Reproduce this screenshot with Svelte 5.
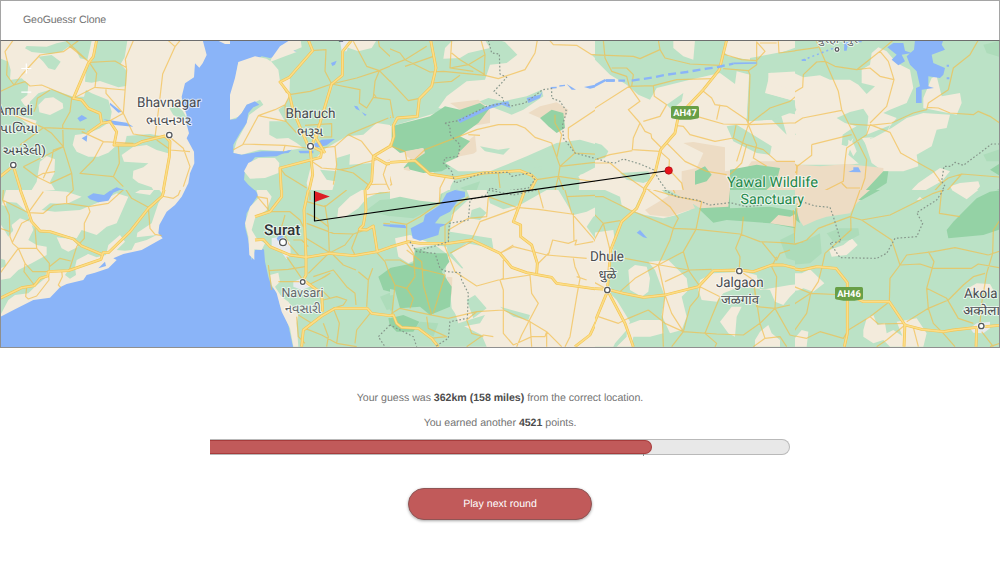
<script>
  // Each sheet is a window on the map, drawn at three units per pixel.
  const sheets = [
    {
      x: 0, y: 40, w: 230, h: 150, vx: 0, vy: 120, base: 'sand',
      areas: [
        ['park', 'M75 145 80 138 140 140 170 130 205 122H275L262 180 240 175 228 150 205 140 185 155 150 162 95 156Z'],
        ['park', 'M115 170 155 165 182 185 165 210 145 205 130 185Z'],
        ['park', 'M290 122H382L374 172 362 192 380 212 378 258 355 262 300 243 275 248 255 245 258 205 275 185Z'],
        ['park', 'M0 175 25 185 32 210 30 240 65 235 85 252 82 285 62 300 75 318 100 325V360L80 360 0 330Z'],
        ['park', 'M90 305 115 280 155 268 220 290 252 290 258 270 275 280 325 300 335 335 330 365 300 385 265 400 225 405 218 435 230 455 265 470 295 470 325 458 345 440 375 430 380 408 450 402 495 410 512 435 505 460 470 450 440 435 400 440 365 465 372 485 445 490 430 502 400 512 398 535 415 548 455 562 460 570H0V335L75 360Z'],
        ['park', 'M508 325 530 318 548 332 565 362 545 358 520 345Z'],
        ['sand', 'M115 315 135 295 160 292 188 310 190 325 150 345 118 337Z'],
        ['sand', 'M120 485 140 468 165 478 163 520 150 545 165 570H95L110 545Z'],
        ['sand', 'M50 345 75 352 110 362 105 378 85 375Z'],
        ['water', 'M608 120 620 165 608 190 598 203 585 190 582 232 555 250 545 290 548 310 560 345 558 365 567 400 560 415 582 455 583 490 570 520 565 550 555 570H750V120Z'],
        ['sand', 'M650 120 675 132H720V120Z'],
        ['water', 'M232 355 245 345 262 355 240 365Z M245 415 262 405 260 425Z M330 308 365 335 355 338 330 315Z M310 358 380 368 400 380 345 375Z M330 572 350 562 372 570Z']
      ],
      minor: 'M40 120 15 155 22 185 20 225 42 255 0 275 M42 255 75 245 90 258 125 255 220 295 M42 255 65 225 120 165 190 155 235 122 M198 122 268 187 290 220 285 262 M268 187 345 183 380 203 M268 187 208 138 M400 122 376 178 380 210 370 340 400 402 465 412 M285 262 375 270 M220 295 285 262 M318 268V280L370 340 330 362 M540 122 525 140 488 222 478 310 465 412 M525 140 505 122 M215 295 210 335 188 375 190 440 215 520 220 570 M150 270 112 295 108 320 102 335 M40 345 130 383 255 388 M130 383 155 400 190 440 M190 440 160 450 155 480 130 535 M245 395 310 425 400 430 M310 425 280 480 240 520 290 525 340 530 370 560 M355 435 358 490 340 530 M60 435 130 383 M190 440 70 500 M70 500 110 530 130 520 165 515 M110 530 150 550 215 520 M508 410 550 445 570 500 550 560 M510 450 570 455 M465 412 500 410 M470 420 512 450',
      major: 'M290 120 280 170 265 190 220 295 245 300 265 325 300 340 305 370 262 400 M305 370 330 365 350 395 342 435 405 435 425 425 495 408 510 425 508 470 490 570 M40 498 0 530 M40 498 62 570'
    },
    {
      x: 0, y: 190, w: 230, h: 157, vx: 0, vy: 30, base: 'sand',
      areas: [
        ['park', 'M0 30H18L5 75 28 82 22 110 40 150 25 170 10 145 0 130Z'],
        ['park', 'M18 65 50 68 80 95 90 125 60 115 35 135 38 155 25 150Z'],
        ['park', 'M130 30H420L405 38 450 45 470 20 490 45 475 70 455 130 412 158 410 172 470 165 440 180 405 190 395 210 375 212 350 210 375 185 360 165 325 195 318 225 290 232 265 222 230 240 225 262 228 285 210 296 195 285 205 270 140 275 135 295 105 320 85 340 45 345 25 360 0 408V300L30 295 55 270 95 250 140 225 140 200 110 195 85 180 100 150 95 135 120 150 170 160 230 175 245 150 290 165 320 140 350 130 385 50 350 40 300 65 240 90 165 95 125 90 150 70 200 72 245 50 200 35Z'],
        ['sand', 'M170 172 220 178 235 200 205 215 185 205Z M235 245 265 222V245Z'],
        ['park', 'M0 235 15 240 18 258 0 265Z'],
        ['water', 'M555 30 545 50 525 75 500 95 478 135 475 160 488 175 425 210 370 222 340 235 350 240 325 265 285 278 260 285 250 300 200 312 180 322 150 353 100 360 45 388 0 411V510H750V30Z'],
        ['water', 'M262 50 280 40 312 45 330 32 360 25 378 22 340 38 325 62 295 67 270 58Z M295 265 315 245 318 258Z']
      ],
      minor: 'M10 30 8 60 85 98 130 35 M8 60 28 105 30 170 38 190 55 205 0 280 M0 145 30 155 M88 118 65 130 38 185 M85 98 130 100 160 75 200 70 265 80 325 70 375 25 395 55 445 82 M265 80 270 95 253 130V175L230 200 208 270 M220 30 200 50V70 M105 145 110 205 55 205 75 250 72 275 105 318 M110 205 148 250V270 M75 250 98 275H145 M148 260 180 235 212 243 M185 272 187 290 175 315 182 322 M80 322 77 350 85 357 110 348 147 300 145 275 M445 82 450 145 465 163 485 167 M485 48 520 55 535 45 545 20 M125 0 150 22 165 25 180 0 M350 0 375 25',
      major: 'M50 0 85 95 95 125 120 153 150 155 220 177 245 198 305 223 M495 20 487 48 445 85 390 155 325 218 310 217 303 238 205 272 145 275 143 288 120 295 103 317 65 323 0 355'
    },
    {
      x: 230, y: 40, w: 160, h: 150, vx: 0, vy: 6, base: 'park',
      areas: [
        ['water', 'M0 6H195L150 25 200 40 120 60 95 55 70 70 25 72 15 130 0 200Z'],
        ['sand', 'M125 60 150 25 180 6H212L215 28 190 38 200 42 165 55 120 72Z'],
        ['sand', 'M25 72 75 55 110 62 125 72 145 95 150 130 180 120 178 175 165 200 145 215 165 250 118 250V290L140 302 175 300 200 315 220 330 160 340 90 335 35 350 10 345 20 310 45 265 58 230 100 200 90 185 70 195 50 200 30 235 0 245V170L15 120Z'],
        ['water', 'M0 245 18 243 35 225 50 200 75 190 88 200 70 208 55 225 50 255 30 285 10 320 10 345 35 350 95 340 165 340 185 335 140 355 75 358 45 395 42 425 55 440 80 462 75 480H0Z'],
        ['sand', 'M42 400 55 375 85 360 135 360 148 375 145 405 105 420 60 422Z'],
        ['sand', 'M245 375 280 335 350 295 400 290 440 255 485 262 490 290 600 355V480H400L370 450 385 435 355 430 330 445 300 475 240 480 230 435Z'],
        ['park', 'M320 360 360 348 358 380 425 375 420 450 360 470 300 480 315 430 290 425 270 395 320 400Z'],
        ['forest', 'M495 250 600 225V380L555 405 520 375 555 345 490 325Z'],
        ['tan', 'M490 405 540 380 555 400 520 405Z M465 370 540 330 585 330V355L510 365Z'],
        ['sand', 'M360 6H440L425 30 385 40 350 28Z'],
        ['town', 'M330 6H362L350 40H335Z'],
        ['water', 'M303 75 320 68 315 80 307 84Z M240 325 275 305 315 303 290 322 255 330Z M140 348 185 335 175 345Z M205 338 250 338V346H210Z M372 203 382 205 390 218 378 213Z M395 222 410 230 405 234Z']
      ],
      minor: 'M178 170 240 160 305 138 M150 130 170 165 M165 200 135 215 85 233 38 320 10 335 M178 175 165 200 168 250 85 233 M38 318 165 322 230 330 M165 322 160 340 M245 38 288 35 285 100 305 138 390 155 388 195 410 210 430 178 435 130 448 98 M305 138 380 120 448 98 410 85 370 10 M448 98 525 65 480 55 448 25 445 6 M525 65 600 15 M525 65 535 85 600 102 M448 98 495 145 520 150 540 180 568 188 M430 178 480 185 497 235 M430 165 440 180 M225 262 305 257 V297 H270 M168 250 200 285 M355 290 475 240 M355 290 315 325 275 330 M355 290 395 310 430 355 M315 325 320 380 310 440 M245 370 275 390 330 395 360 390 400 375 440 365 M330 395 370 405 415 440 M300 460 400 465 415 440 470 438 460 410 470 380 M470 438 483 465 400 460 M470 378 570 365 600 330 M150 390 165 410 230 450 M155 460H310',
      major: 'M235 6 248 38 178 118 150 132 178 168 190 220 235 325 M365 6 338 40 337 112 305 138 270 255 245 325 M245 325 275 340 272 358 150 390 155 480 M240 325 248 410 232 480 M265 280 258 300 285 345 M600 148 568 185 567 232 497 240 487 262 492 300 480 325 430 355 425 430 400 470 M430 355 470 378 555 365 600 405'
    },
    {
      x: 230, y: 190, w: 160, h: 157, vx: 0, vy: 0, base: 'park',
      areas: [
        ['water', 'M0 0H75L85 15 65 45 50 70 45 110 55 150 65 210 75 180 102 178 105 215 115 260 125 290 145 310 150 345 175 405 190 475H0Z'],
        ['sand', 'M80 0H110L125 20 110 60 75 85 65 120 80 145 105 160 95 180 73 178V210L58 195 55 140 45 100 60 50 85 25Z'],
        ['sand', 'M120 255 145 248 150 275 135 290 155 320 175 335 205 375 200 400 205 470H190L180 415 155 365 140 310 125 285Z'],
        ['parkmid', 'M410 60 450 30 510 25 560 10 600 20V90L500 85Z M450 320 500 300 510 350 470 360Z'],
        ['sand', 'M325 55 360 20 395 0H600V34L560 28 520 10 450 6 410 25 385 55 340 85 322 80Z M495 145 550 135 600 180V215L555 205 530 225 505 200Z'],
        ['forest', 'M445 260 480 235 520 232 560 190 600 180V370L540 350 490 350 500 310 460 300Z M475 385 520 372 565 395 560 415 520 428 480 410Z'],
        ['town', 'M125 145 150 140 180 155 182 190 170 208 150 180 125 170Z M190 275 225 262 240 290 215 300 190 290Z'],
        ['water', 'M542 115 560 95 600 70V150L555 145Z M460 103 520 107 525 115 460 108Z M140 145 155 130 160 145 145 155Z']
      ],
      minor: 'M82 20 120 65 H180 L210 90 220 110 M115 65 112 25 80 20 M165 75 155 110 175 160 210 200 M230 35 285 50 350 0 M285 45 295 110 298 188 M240 30 240 5 M230 70 262 85 295 110 M230 100 310 130 370 132 420 115 M370 132 345 165 300 188 228 145 M298 188 235 250 M300 185 340 225 378 240 M375 195 365 175 390 110 M115 242 175 238 225 230 M190 150 215 150 235 170 M145 275 215 275 M170 200 215 265 M115 225 125 300 M250 260 310 240 350 290 375 310 378 345 M385 245 415 270 410 350 M415 270 428 235 M275 265 300 250 285 260 235 285 M280 330 320 320 350 330 340 345 310 355 M300 325 275 300 M438 185 465 215 490 285 495 375 M465 210 500 210 530 235 560 260 555 350 M530 155 528 225 M490 285 520 280 545 305 M500 375 540 350 600 365 M225 415 275 435 320 460 380 470 M310 355 328 400 320 460 M280 400 295 440 290 470 M420 370 380 420 375 460 M205 375 245 400 225 420 M200 380 205 440 225 460 M530 105 545 110 600 85 M460 100 530 105 530 155 M405 15 480 6 485 0',
      major: 'M235 0 222 60 228 200 228 255 220 270 275 310 278 365 M155 0 155 20 120 65 75 80 M405 0 408 60 400 105 388 118 410 120 430 108 442 185 M75 150 100 148 120 170 180 195 228 202 300 190 370 197 442 185 540 150 600 158 M215 470 220 420 275 378 315 355 412 355 425 370 490 378 500 398 520 410 565 415 600 450',
      dots: 'M540 150 560 180 600 190 M480 405 445 440 465 470 M480 405 525 430 560 460 V470'
    },
    {
      x: 390, y: 40, w: 205, h: 150, vx: 30, vy: 6, base: 'sand',
      areas: [
        ['park', 'M0 6H355L375 12 412 50 380 75 330 80 315 125 260 130 200 175 175 210 200 215 50 260 0 270Z'],
        ['sand', 'M215 10 315 6 330 30 265 45 240 60 190 62 195 30Z'],
        ['park', 'M270 190 300 190 325 180 370 190 440 175 485 155 490 175 430 215 395 230 330 205Z'],
        ['tan', 'M210 195 295 185 330 215 330 255 270 265 240 215Z M225 340 285 292 290 340 240 380Z'],
        ['park', 'M160 400 230 375 240 395 330 400 440 355 530 315 600 305 670 325V400L600 410 595 480H170Z M300 325 355 335 390 330 370 350 315 340Z'],
        ['forest', 'M35 265 60 258 150 235 195 205 240 215 300 195 328 212 295 255 240 295 270 310 235 345 230 375 185 400 130 405 70 390 95 360 130 330 60 345 35 325Z'],
        ['tan', 'M75 340 130 330 135 345 100 368 80 355Z M40 405 85 385 95 410 70 400Z'],
        ['sand', 'M290 345 315 340 335 365 400 365 320 400 235 400 195 375 240 355Z'],
        ['tan', 'M445 225 480 205 530 193 565 215 555 240 540 260 520 230 480 240Z'],
        ['forest', 'M480 240 515 215 550 225 555 270 530 285 505 265Z'],
        ['park', 'M635 50H670V85Z'],
        ['sand', 'M595 415 670 375V450L610 440Z M0 370 68 380 72 395 130 408 225 420 212 445 205 480H0Z'],
        ['park', 'M460 390 490 385 465 420Z'],
        ['parkmid', 'M240 450 300 430 285 470Z'],
        ['water', 'M232 245 340 198 385 190 392 210 365 200 330 212 240 255Z M440 180 480 170 488 160 480 180 445 195Z M200 475 230 455 258 462 235 480H200Z M560 138 588 155 575 155Z M612 147 670 135V142L630 152Z M490 152 505 152 M512 147 530 146V151L512 152Z M538 142 555 140V144L538 146Z']
      ],
      minor: 'M0 20 60 45 75 65 140 25 M75 65 150 102 190 100 315 112 355 122 435 95 465 45 472 6 M0 95 45 145 85 188 115 182 M0 95 75 65 M160 55 75 85 M215 6 210 90 265 80 315 50 303 6 M210 90 280 100 M155 135 215 130 240 112 M215 45 240 65 315 110 M508 6 520 20 590 22 635 50H670 M0 185 30 185 40 240 M35 325 75 340 80 365 M100 368 135 335 290 275 355 260 410 260 435 270 465 298 515 315 540 385 535 415 M670 200 565 270V300L585 345 670 350 M545 290 530 360 M585 345 540 385 670 370 M525 230V255L545 290 M535 415 470 425 M535 415 560 480 M535 415 670 435 M0 130 20 180 M195 420 180 450V480 M355 405 360 450 M265 290 300 292 M20 380 35 440 0 450 M535 415 520 480 M315 50 312 112',
      major: 'M152 6 168 90 155 145 118 182 112 235 52 240 40 262 42 295 32 325 0 340 M32 235 0 248 M0 375 105 368 150 408 225 420 310 405 420 398 455 412 468 425 455 450 440 480',
      dots: 'M325 6 335 45 358 48 360 108 380 118 342 160 368 180 372 195 393 204 435 195 488 155 515 152 515 180 540 190 560 220 548 260 550 300 585 345 670 368 M195 255 235 248 320 205 370 195 M195 255 210 265 210 290 240 320 235 355 195 360 190 375 215 400 225 435 280 415 310 405 385 403 395 415 450 405 465 425 445 450 370 460 330 450 320 475'
    },
    {
      x: 390, y: 190, w: 205, h: 157, vx: 30, vy: 0, base: 'sand',
      areas: [
        ['park', 'M0 0H260L270 25 215 75 210 125 335 145 340 175 260 160 215 190 250 235 215 240 220 350 235 400 305 435 320 470H0Z'],
        ['parkmid', 'M0 20 40 0H190L180 45 100 85 0 75Z M0 320 40 315 40 360 0 370Z M120 395 175 400 160 440 110 410Z'],
        ['sand', 'M0 0H205L182 12 178 38 120 32 60 20 0 34Z'],
        ['sand', 'M45 145 90 135 165 165 200 170 205 195 165 165 100 175 120 205 85 220 55 200Z'],
        ['sand', 'M205 195 250 240 275 330 235 385 215 355 210 300 195 250Z M265 345 290 345 295 370 260 375Z'],
        ['tan', 'M200 260 217 262 215 320Z'],
        ['park', 'M275 60 300 52 320 68 300 90 270 85Z M320 0H500L420 45 370 58 330 40Z M535 0H670V40L620 65 580 75Z M260 330 285 315 320 355 280 385Z M360 350 450 375 445 390 400 380Z M235 400 315 375 300 400 245 410Z'],
        ['forest', 'M0 240 40 232 100 220 105 175 155 190 200 190 208 215 185 245 215 290 210 350 150 375 120 350 60 355 45 300 0 290Z M30 385 70 375 118 395 100 425 50 425 30 405Z'],
        ['park', 'M640 80 670 70V150L645 145 620 110Z'],
        ['water', 'M92 115 130 95 135 75 180 45 200 10 225 0 255 5 255 20 235 30 210 65 180 80 165 100 200 103 180 112 175 135 120 152 98 145Z M10 102 75 105 80 115 10 109Z']
      ],
      minor: 'M0 90 80 103 120 80 178 40 180 0 M80 103 80 160 100 190 105 260 80 295 45 285 10 210 M80 180 125 215 130 285 155 375 M10 210 60 210 95 230 195 255 160 370 M80 295 100 325 90 355 M45 285 35 380 M265 20 225 50 215 90 195 105 195 170 225 245 290 288 355 270 450 255 M325 20 320 80 265 85 205 120 205 150 M325 20 410 52 M410 55 300 95 275 150 M410 52 475 58 575 72 M475 0 490 55 M555 0 575 70 640 145 650 160 M580 70 582 155 M210 190 275 155 M505 195 518 150 565 160 590 150 585 165 640 155 M360 190 400 170 500 195 620 205 M370 210V265L360 270 370 300V430L400 465 M450 255 455 310 475 340 425 435 410 470 M370 360 450 395 500 425 545 470 M500 425 495 440 455 440 400 465 M500 425V470 M580 205 585 230 600 265 590 320 570 440 555 470 M450 395 455 470 M205 385 290 365 370 360 M290 365 260 390 275 430 310 440 M140 380 145 415 200 440 150 445 M35 370 60 355 130 370 205 385 M470 225 510 185 M360 190 400 165 M590 260 620 270 M0 445 0 470 M260 470 310 435 340 440 M560 20 670 15',
      major: 'M0 180 85 155 120 160 205 160 275 150 360 190 395 232 440 248 515 262 530 280 670 300 M435 0 400 95 422 105V140L455 165 472 220 470 250 M0 380 40 375 50 400 65 412 115 415 155 445 175 470 M670 350 630 435 585 470',
      dots: 'M90 155 110 185 165 190 180 235 200 245 240 248 245 270 265 310 262 385 210 395 205 445 165 470 M120 180 165 168 205 155 208 100 265 90 270 30 320 15 325 0 400 15 470 0 M0 440 30 405 100 440 110 470'
    },
    {
      x: 595, y: 40, w: 200, h: 150, vx: 15, vy: 6, base: 'sand',
      areas: [
        ['park', 'M0 6H415L400 40 415 55 500 70 640 20V175L600 135 540 100 520 170 590 190 620 230 570 220 590 290 545 245 470 250 480 110 440 100 435 138 390 105 300 125 200 150 180 185 145 170 110 140 60 110 0 50Z'],
        ['park', 'M480 60 640 30V100L540 105 525 165 600 185 640 190V215L600 225 545 245 470 248Z'],
        ['sand', 'M250 6H315L310 65 280 55 250 30Z M405 6H435L430 35 410 20Z M535 105 620 100 640 180 600 185 530 165 590 150 535 130Z'],
        ['park', 'M230 200 280 165 275 190 245 215Z M410 265 440 260 545 325 540 350 500 345 430 310Z M0 310 35 320 55 340 45 360 0 370Z M90 405 175 400 185 425 160 435 110 425Z'],
        ['park', 'M0 460 80 460 130 480H0Z M220 465 280 455 290 480H220Z'],
        ['tan', 'M280 315 310 312 405 328V400L470 390 485 370 640 370V480H300L275 450V400L320 390 340 345Z'],
        ['forest', 'M315 400 345 385 365 410 350 430 315 440Z M420 395 500 380 570 390 560 430 500 480H420Z'],
        ['water', 'M0 145 45 123 50 128 10 150Z M48 124 75 124V131H48Z']
      ],
      minor: 'M0 50 130 55 150 62 210 35 225 60 300 78 390 82 M210 35 205 6 M40 6 45 60 65 100 110 115 118 145 M65 90 110 90 130 110 125 145 M118 145 0 220 M118 145 190 143 260 125 370 122 M190 143 193 175 230 200 210 235 160 250 M118 145 150 190 115 215 150 255 M340 160 365 180 375 200 410 205 470 245 475 258 M390 200 380 245 M320 235 400 258 475 260 600 255 640 255 M255 262 280 265 300 290 375 310 430 300 M150 255 130 300 127 335 210 340 M150 255 165 280 183 288 185 300 215 330 M0 370 60 350 127 338 M230 315 285 370 350 400 410 410 M430 300 438 262 M430 300 470 320 520 335 560 370 640 370 M475 260 500 320 M475 260 540 210 600 190 640 155 M400 92 475 98 480 110 475 258 M400 48 455 65 500 68 V80 L475 98 M500 68 525 40 500 12 V68 M565 10 567 45 640 35 M510 15 560 15 M0 375 60 375 95 405 160 450 220 470 M470 320 455 375 420 410 M475 260 440 370 M210 340 238 365 237 395 275 435 285 480 M160 455 190 480 M500 320 490 360 530 385',
      major: 'M410 6 388 95 340 155 265 235 255 285 212 335 195 405 165 450 155 480',
      dots: 'M0 355 50 372 75 375 100 363 150 378 190 395 210 430 240 470 280 490',
      canal: 'M48 128 105 128 M125 128 190 118 230 110 290 102 350 92 385 87 405 82 430 77',
      stream: 'M430 76 500 75'
    },
    {
      x: 595, y: 190, w: 200, h: 157, vx: 15, vy: 0, base: 'park',
      areas: [
        ['sand', 'M45 0H160L130 65 95 45 90 20Z M160 0H215L250 30 310 40 300 60 260 75 220 85 165 75 135 65Z M0 70 15 90 0 120Z M0 130 70 120 75 155 60 210 50 300 80 330 120 395 110 420 75 460 70 470H0Z'],
        ['sand', 'M115 240 135 225 170 230 180 265 175 305 155 320 120 300Z M175 215 235 210 290 265 295 300 275 320 290 380 275 420 240 430 215 375 225 320 195 240Z M330 270 370 250 460 245 500 255 510 300 600 285 640 280 600 320 580 345 555 335 540 300 450 290 400 310 380 335 335 330 325 300Z'],
        ['sand', 'M110 405 150 390 215 390 220 430 180 440 130 440 125 470H80L110 440Z M390 395 425 350 455 350 440 380 435 440 415 430Z M495 450 510 425 535 405 545 430 570 450 570 470H495Z'],
        ['tan', 'M165 60 240 15 300 25 315 55 235 80 180 75Z'],
        ['forest', 'M310 0H420V55L540 50 600 60 640 70V120L540 100 410 90 370 98 330 60Z'],
        ['tan', 'M235 0H420L415 50 330 55 290 30Z M540 100 565 75 600 80 640 60V115Z'],
        ['parkmid', 'M570 150 640 115V220L590 205Z'],
        ['water', 'M140 128 150 120 172 145 160 142Z']
      ],
      minor: 'M0 20 40 20 120 60 250 115 320 118 450 132 510 155 575 158 640 165 M0 60 40 100 90 92 M40 100 10 155 M105 205 210 225 295 240 M40 100 60 180 M175 0 240 50 265 85 250 115 240 150 205 225 135 265 90 305 M190 0 260 20 335 35 318 118 280 185 205 225 M250 0 255 10 M280 185 297 243 330 290 M205 225 225 315 217 380 220 470 M225 315 245 370 280 425 380 432 460 435 510 400 555 355 600 345 M225 275 300 240 365 238 M330 290 325 320 300 350 280 425 245 470 M175 360 115 385 85 400 25 380 M175 360 225 400 280 425 M330 290 390 320 365 380 345 430 M460 80 455 130 437 175 450 200 448 238 M610 60 615 160 M515 155 560 210 570 190 600 180 M460 250 490 270 510 400 525 445 M545 230 560 260 555 355 M490 270 500 350 555 355 600 435 640 445 M525 445 490 470 M525 445 570 440 590 470 M345 430 380 460 375 470 M0 150 15 150 M0 270 55 300 M560 200 545 230',
      major: 'M165 0 140 55 95 95 62 180 52 300 105 400 130 470 M0 295 52 298 100 310 160 322 225 315 325 290 370 242 448 240 490 245 545 225 580 225 640 240 M52 305 0 430',
      dots: 'M225 0 260 20 320 30 360 45 420 38 470 50 520 45'
    },
    {
      x: 795, y: 40, w: 205, h: 150, vx: 15, vy: 6, base: 'park',
      areas: [
        ['sand', 'M0 100 40 118 90 112 120 125 180 125 205 140 230 168 255 145 215 135 215 95 240 80 245 45 265 28 290 40 320 75 360 95 370 150 350 195 300 215 280 225 320 240 300 265 290 290 240 300 245 350 225 375 170 380 0 380 15 290 0 260V220L20 215 0 195Z'],
        ['park', 'M140 240 180 222 220 212 235 235 230 290 300 262 285 295 215 300 245 345 245 365 215 385 175 350 190 300 170 325 155 320 158 290 180 275 200 265 165 255Z M0 195 15 200 18 220 0 220Z M0 265 18 290 0 290Z'],
        ['sand', 'M175 305 190 315 200 340 190 355 175 325Z'],
        ['sand', 'M250 300 305 270 350 240 400 225 480 230 470 270 440 275 425 325 380 350 385 385 340 400 280 400 245 375 222 305Z'],
        ['sand', 'M400 180 425 120 440 115 455 175 510 165 515 195 500 230 400 210Z M365 455 385 435 450 390 480 400 455 430 400 460Z M480 445 510 435 565 430 570 445 550 470 500 480Z'],
        ['tan', 'M0 378 90 385 170 378 280 390 280 440 220 470 210 480H0Z'],
        ['forest', 'M280 400 295 400 290 435 220 480H205ZM600 395 640 370V420ZM540 480 640 450V480Z'],
        ['parkmid', 'M580 20 640 6V60L590 45ZM580 350 640 330V370H590Z'],
        ['water', 'M375 6H460L455 20 465 35 425 50 430 75 465 90 460 110 450 120 415 115V145L432 150 395 155 395 195H378V150L390 145 380 100 360 80 350 55 372 35Z M310 15H340L345 38 365 45 335 50 345 70 325 82 305 65 320 50 292 28Z M163 15 175 10 170 38 162 38Z M175 402 190 395V388H205L213 403Z M35 64 48 64V69H35Z M205 8H215V13H205Z M470 80H477V86H470Z M470 118H478V124H470Z']
      ],
      minor: 'M0 40 85 28 M78 6 145 160 155 215 230 365 225 420 205 480 M0 170 38 148 40 110 80 72 105 70 135 85 200 95 270 40 310 6 M270 40 295 70 312 125 290 205 240 255 M200 95 240 90 270 115 312 125 M0 265 38 240 155 217 M180 258 240 262 305 255 370 225 410 215 415 195 475 155 490 90 540 50 565 6 M240 260 300 283 332 345 430 400 455 435 M240 260 230 290 170 330 165 370 160 430 100 460 0 460 M65 320 185 290 M65 320 65 352 22 385 20 410 M0 365 22 385 M155 435 170 450 210 450 M412 208 445 210 480 225 550 230 565 220 600 235 640 262 M455 435 475 420 515 408 640 418 M455 435 425 468 380 480 M515 408 465 465 460 480 M455 435 445 425 M600 480 640 455 M20 380 20 400 5 410',
      major: '',
      dots: 'M640 318 605 318 520 382 495 373 483 385 462 385 455 430 465 445 440 475'
    },
    {
      x: 795, y: 190, w: 205, h: 157, vx: 15, vy: 0, base: 'park',
      areas: [
        ['tan', 'M0 0H250L200 40 180 70 110 80 80 90 40 108 25 85 20 40 0 30Z'],
        ['forest', 'M205 30 240 0H270L215 30ZM475 145 470 120 490 95 530 55 560 25 600 5 640 0V115L580 135Z M0 30 20 60 30 100 0 75Z'],
        ['sand', 'M485 0H565L530 28Z M380 30 390 20 400 30Z M118 180 160 165 185 145 203 165 170 195 125 200Z M0 250 35 250 60 238 103 280 70 305 40 295 30 300 0 305Z M220 420 230 385 250 375 262 405 285 400 290 430 310 420 340 440 360 470H300L280 450 250 460 220 440Z M320 395 380 385 410 430 400 470H350Z M10 450 35 420 55 425 50 470H5Z'],
        ['sand', 'M525 300 560 280 600 282 610 300 580 310Z'],
        ['parkmid', 'M110 130 150 115 205 115 208 135 180 150 130 155Z M0 165 40 155 90 130 95 190 60 220 0 225Z'],
        ['town', 'M540 415 560 400 600 395 600 415 580 430 550 428Z']
      ],
      minor: 'M22 40 10 165 50 150 85 115 180 80 215 90 300 75 380 35 430 10 460 0 M210 0 182 80 183 120 105 190 95 235 85 275 62 310 0 350 M215 90 305 150 330 225 350 195 430 185 495 173 595 195 M330 225 390 222 430 235 545 235 565 222 640 235 M330 225 300 265 298 335 M415 185 432 215 410 295 415 355 430 400 460 430 495 470 M410 295 470 325 505 385 550 400 M415 355 350 395 M415 355 475 330 520 285 550 260 585 250 M630 90 610 120 608 190 590 250 575 340 570 400 M595 195 640 180 M62 310 50 370 0 440 M62 310 170 315 M62 310 0 285 M175 420 240 380 298 335 M175 420 160 445 90 425 50 445 0 435 M240 380 265 402 345 400 M345 405 290 450 260 470 M370 412 385 470 M575 425 610 470 M0 165 40 155 M455 0 448 70 510 80 M630 460 600 470',
      major: 'M0 235 35 240 80 230 138 235 172 278 V430 L163 470 M172 310 220 335 H298 L345 405 395 418 460 425 490 420 560 412 640 405 M345 400 342 470 M560 415 558 470',
      dots: 'M45 38 75 48 120 52 130 80 153 155 120 158 150 203 260 205 290 190 315 145 380 140 398 100 380 68 440 30 460 0'
    }
  ];

  const places = [
    { t: 'Amreli', x: -4, y: 115.2, s: 13.8, w: 37 },
    { t: 'પાળિયા', x: 0, y: 133, s: 12.5, w: 38 },
    { t: 'અમરેલી)', x: 3, y: 155, s: 12.5, w: 43 },
    { t: 'Bhavnagar', x: 137, y: 106.5, s: 13.8, w: 64 },
    { t: 'ભાવનગર', x: 146, y: 125.3, s: 12.5, w: 45 },
    { t: 'Bharuch', x: 285.5, y: 118, s: 13.8, w: 50 },
    { t: 'ભરૂચ', x: 297, y: 136, s: 12.5, w: 26 },
    { t: 'Surat', x: 264, y: 235, s: 15, w: 36.5, b: true },
    { t: 'Navsari', x: 281.5, y: 296.5, s: 12.8, w: 42, soft: true },
    { t: 'નવસારી', x: 285, y: 312.7, s: 12.3, w: 36, soft: true },
    { t: 'Dhule', x: 590, y: 261.3, s: 13.8, w: 34 },
    { t: 'धुळे', x: 598.5, y: 279, s: 12.5, w: 18 },
    { t: 'Jalgaon', x: 716, y: 286.5, s: 13.8, w: 47.5 },
    { t: 'जळगांव', x: 721, y: 304, s: 12.5, w: 38 },
    { t: 'Akola', x: 964, y: 297.7, s: 13.8, w: 33.5 },
    { t: 'अकोला', x: 963, y: 315.3, s: 12.5, w: 37 },
    { t: 'Yawal Wildlife', x: 727, y: 187, s: 14.3, w: 91, green: true },
    { t: 'Sanctuary', x: 740.5, y: 203.5, s: 14.3, w: 63.5, green: true }
  ];
  const towns = [[13.3, 165, 2.7], [169.3, 135, 2.7], [310.5, 146.3, 2.9], [283, 242.3, 3.4], [302.7, 282, 2.3], [607.3, 290, 2.7], [739.3, 271, 2.7], [981.3, 326, 2.7], [837, 49.5, 1.8]];
  const shields = [{ t: 'AH47', x: 671, y: 106 }, { t: 'AH46', x: 835, y: 287 }];
  const km = 362, miles = 158, points = 4521;
  let progress = 76.3;
</script>

<div class="app">
  <header>GeoGuessr Clone</header>

  <section class="map">
    <svg class="canvas" viewBox="1 41 998 306" width="998" height="306">
      {#each sheets as s}
        <svg x={s.x} y={s.y} width={s.w} height={s.h} viewBox="{s.vx} {s.vy} {s.w * 3} {s.h * 3}">
          <rect class={s.base} x={s.vx} y={s.vy} width={s.w * 3} height={s.h * 3} />
          {#each s.areas as [kind, d]}<path class={kind} {d} />{/each}
          <path class="minor" d={s.minor} />
          {#if s.major}
            <path class="casing" d={s.major} />
            <path class="major" d={s.major} />
          {/if}
          {#if s.canal}<path class="canal" d={s.canal} />{/if}
          {#if s.stream}<path class="stream" d={s.stream} />{/if}
          {#if s.dots}<path class="dots" d={s.dots} />{/if}
        </svg>
      {/each}

      <path class="canal-dots" d="M803 60 834 48" />
      <path d="M338 39.500h6l-1 2h-4z" fill="#14204a" />

      {#each towns as [cx, cy, r]}
        <circle class="halo-dot" {cx} {cy} r={r + 1.4} />
        <circle class="town-dot" {cx} {cy} {r} />
      {/each}

      <text class="place soft" x="817" y="42.5" font-size="11.5" textLength="41" lengthAdjust="spacingAndGlyphs">बुरहानपुर</text>
      {#each places as p}
        <text class="place" class:bold={p.b} class:soft={p.soft} class:sanctuary={p.green}
          x={p.x} y={p.y} font-size={p.s} textLength={p.w} lengthAdjust="spacingAndGlyphs">{p.t}</text>
      {/each}

      {#each shields as s}
        <path class="shield" transform="translate({s.x} {s.y})" d="M1.500 0h25q1.500 0 1.500 1.500v9.500q0 1-1.500 1.500l-7 1.300h-11l-7-1.300Q0 12 0 11V1.500Q0 0 1.500 0z" />
        <text class="shield-text" x={s.x + 14} y={s.y + 10.4} textLength="23.500" lengthAdjust="spacingAndGlyphs">{s.t}</text>
      {/each}

      <path class="zoom" d="M21.300 68.500h10M26.300 63.500v10M21.300 92.200h10" />

      <path class="guess" d="M314.500 191v30L669 170.500" />
      <path d="M315 191.200l14.800 5.300L315 202z" fill="#dc1f26" />
      <circle cx="668.700" cy="170.500" r="3.700" fill="#e8121b" stroke="#a80d12" stroke-width=".7" />
    </svg>
  </section>

  <main>
    <p class="distance">Your guess was <b>{km}km ({miles} miles)</b> from the correct location.</p>
    <p class="score">You earned another <b>{points}</b> points.</p>
    <div class="track"><div class="fill" style="width: {progress}%"></div></div>
    <button>Play next round</button>
  </main>
</div>

<style>
  :global(body) { background: #fff; }
  .app {
    display: flex;
    flex-direction: column;
    width: 1000px;
    height: 563px;
    overflow: hidden;
    font-family: "Liberation Sans", Arial, sans-serif;
    font-size: 10.6px;
    text-rendering: geometricPrecision;
    color: #737373;
  }
  header {
    box-sizing: border-box;
    height: 40px;
    flex: none;
    padding-left: 22px;
    border: 1px solid #a5a5a5;
    border-bottom: 0;
    line-height: 38px;
    letter-spacing: -0.12px;
  }
  .map {
    box-sizing: border-box;
    flex: none;
    height: 308px;
    border: 1px solid rgba(70, 70, 70, 0.6);
    border-top-color: #6d6d6d;
  }
  .canvas { display: block; }
  .sand { fill: #f3ebdc; }
  .park { fill: #bbe2c6; }
  .parkmid { fill: #addcba; }
  .forest { fill: #94d2a5; }
  .tan { fill: #eddcc4; }
  .water { fill: #8ab4f8; }
  .town { fill: #e8eaed; }
  .minor, .casing, .major, .dots, .canal, .stream, .canal-dots, .guess, .zoom {
    fill: none;
    stroke-linejoin: round;
  }
  .minor { stroke: #f3bd48; stroke-width: 3.6; opacity: 0.68; }
  .casing { stroke: #f4c452; stroke-width: 8.5; }
  .major { stroke: #fbdd87; stroke-width: 4.8; }
  .dots { stroke: #85958a; stroke-width: 3.5; stroke-dasharray: 5 6; }
  .canal { stroke: #8ab4f8; stroke-width: 7; stroke-dasharray: 24 13; }
  .stream { stroke: #8ab4f8; stroke-width: 5; }
  .canal-dots { stroke: #8ab4f8; stroke-width: 1.5; stroke-dasharray: 2 3; }
  .halo-dot { fill: #fff; opacity: 0.7; }
  .town-dot { fill: #fff; stroke: #55585b; stroke-width: 1.3; }
  .place {
    font-family: Roboto, "Noto Sans", "Noto Sans Gujarati", "Noto Sans Devanagari", sans-serif;
    fill: #484b4f;
    stroke: #fff;
    stroke-width: 2px;
    stroke-opacity: 0.7;
    stroke-linejoin: round;
    paint-order: stroke;
  }
  .bold { font-weight: 500; fill: #303336; }
  .soft { fill: #64676a; }
  .sanctuary { fill: #23884a; }
  .shield { fill: #689f46; }
  .shield-text {
    font: 700 9.6px Roboto, sans-serif;
    fill: #fff;
    text-anchor: middle;
  }
  .zoom { stroke: #fff; stroke-width: 1.2; }
  .guess { stroke: #000; stroke-width: 1.2; }
  main {
    display: flex;
    flex-direction: column;
    align-items: center;
  }
  p { margin: 0; line-height: 14px; white-space: nowrap; letter-spacing: -0.02px; }
  b { color: #4c4c4c; }
  .distance { margin-top: 43px; }
  .score { margin-top: 11px; }
  .track {
    box-sizing: border-box;
    width: 580px;
    height: 16px;
    margin-top: 9px;
    border: 1px solid #b9b9b9;
    border-left: 0;
    border-radius: 0 8px 8px 0;
    background: #e8e8e8;
  }
  .fill {
    position: relative;
    box-sizing: border-box;
    height: 14px;
    border: 1px solid #a83c3c;
    border-left: 0;
    border-radius: 0 7px 7px 0;
    background: #c15a5a;
  }
  .fill::after {
    content: "";
    position: absolute;
    right: 7px;
    bottom: -3px;
    width: 1px;
    height: 2px;
    background: #8a8a8a;
  }
  button {
    width: 184px;
    height: 32px;
    margin-top: 33px;
    padding: 0;
    border: 1px solid #8f5555;
    border-radius: 16px;
    background: #c15a5a;
    box-shadow: 0 1px 3px rgba(0, 0, 0, 0.35);
    color: #fff;
    font: 10.6px "Liberation Sans", Arial, sans-serif;
    text-rendering: geometricPrecision;
  }
</style>
